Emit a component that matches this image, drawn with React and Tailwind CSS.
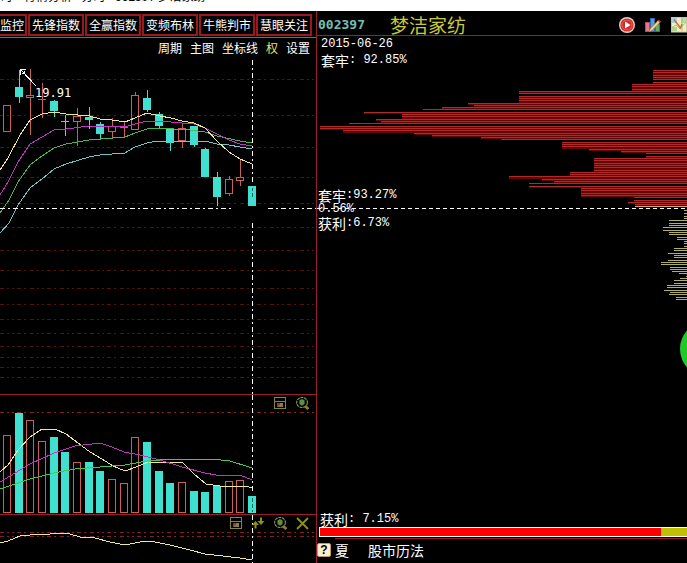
import React from 'react';

const TABS = ['先锋指数', '全赢指数', '变频布林', '牛熊判市', '慧眼关注'];
const MENU = ['周期', '主图', '坐标线', '权', '设置'];

const TEAL = '#40e0d0';
const RED = '#c8605a';

// x, open/close top, open/close bottom, high, low, rising
const CANDLES = [
  [7, 105, 132, 105, 132, true],
  [19, 87, 97, 70, 103, false],
  [30, 95, 98, 69, 135, true],
  [42, 99, 100, 83, 118, true],
  [54, 101, 111, 100, 117, false],
  [65, 121, 122, 115, 136, false],
  [77, 116, 122, 108, 146, true],
  [89, 117, 120, 107, 129, false],
  [100, 124, 134, 122, 139, false],
  [112, 126, 132, 118, 138, true],
  [124, 127, 128, 122, 138, true],
  [135, 95, 130, 92, 130, true],
  [147, 98, 110, 90, 112, false],
  [159, 114, 126, 112, 128, false],
  [170, 129, 143, 129, 151, false],
  [182, 128, 141, 124, 148, true],
  [194, 126, 145, 126, 147, false],
  [205, 149, 177, 148, 177, false],
  [217, 177, 197, 172, 206, false],
  [229, 179, 194, 176, 196, true],
  [240, 177, 181, 159, 186, true],
  [252, 186, 206, 186, 206, false],
];

const VOLUMES = [435, 413, 420, 441, 437, 452, 462, 462, 471, 479, 483, 437, 442, 471, 483, 482, 491, 492, 486, 481, 480, 496];

const PRICE_GRID = [79, 115, 147, 177, 203, 227, 250, 270, 288, 304, 319, 333, 346, 357, 367, 377];

const PRICE_LINES = [
  { color: '#68c8cc', points: '0,233 9,223 18,205 30,188 42,179 54,169 66,164 89,157 100,155 125,153 135,147 147,143 158,141 205,141 217,144 229,145 240,147 252,149' },
  { color: '#48b848', points: '0,213 9,200 18,182 30,165 42,156 54,148 66,144 89,140 125,137 135,133 147,129 158,128 190,130 205,132 217,136 240,141 252,143' },
  { color: '#c034c0', points: '0,195 8,182 18,162 30,144 42,137 54,130 66,129 89,126 125,127 135,124 147,121 160,121 182,123 194,124 205,128 217,134 229,140 240,144 252,146' },
  { color: '#f0e890', points: '0,170 8,158 20,135 30,120 42,114 54,112 66,114 90,116 100,119 112,120 125,122 135,118 147,113 160,116 171,118 182,121 194,123 205,128 217,141 229,152 240,159 252,164' },
];

const VOLUME_LINES = [
  { color: '#f0e890', points: '0,472 8,465 18,450 30,437 42,429 55,429 66,434 78,443 90,452 102,459 113,466 125,471 136,467 148,462 183,463 194,474 206,484 220,486 246,486 252,488' },
  { color: '#c034c0', points: '0,482 30,464 54,453 75,446 100,443 112,447 124,452 140,455 160,460 182,467 205,473 216,475 240,475 252,480' },
  { color: '#48c848', points: '0,489 30,479 54,473 75,469 100,467 125,465 147,461 160,460 176,459 212,459 230,461 252,468' },
];

const TREND_LINE = [
  { color: '#f0e890', points: '0,543 8,541 20,536 30,535 50,534 55,533 70,534 80,537 95,538 110,542 125,545 135,543 145,541 155,542 170,545 190,550 205,554 240,558 252,560' },
];

// Chips above the current price: y, left edge
const TRAPPED = [
  [70, 653], [72, 653], [75, 653], [77, 653], [79, 653], [82, 653], [84, 632], [86, 632], [89, 632],
  [91, 519], [93, 519], [96, 519], [98, 519], [100, 519], [103, 468], [105, 474], [107, 442], [109, 423],
  [112, 364], [114, 402], [116, 402], [119, 376], [121, 381], [123, 349], [126, 320], [128, 320], [130, 343],
  [133, 414], [135, 432], [137, 481], [139, 501], [142, 562], [144, 562], [146, 562], [149, 589], [151, 621],
  [153, 646], [156, 646], [158, 594], [160, 594], [163, 594], [165, 594], [167, 594], [170, 594], [172, 570],
  [174, 570], [176, 509], [179, 542], [181, 554], [183, 529], [186, 529], [188, 581], [190, 581], [193, 581],
  [195, 581], [197, 634], [200, 634], [202, 628], [204, 635],
];
const OPEN_ROWS = [79, 93, 109, 123, 139, 153, 183, 197];

// Chips below the current price
const PROFIT = [
  [210, 684], [213, 684], [216, 684], [218, 684], [220, 669], [223, 669], [225, 669], [227, 663], [230, 663],
  [232, 669], [234, 669], [237, 677], [239, 677], [241, 684], [243, 684], [246, 684], [248, 674], [250, 674],
  [253, 668], [255, 674], [257, 674], [260, 668], [262, 661], [264, 661], [267, 670], [269, 670], [271, 672],
  [273, 679], [276, 686], [278, 680], [280, 674], [283, 674], [285, 667], [287, 667], [290, 664], [292, 670],
  [294, 669], [297, 676], [299, 676],
];

function Lines({ items }) {
  return items.map(l => (
    <polyline key={l.color} points={l.points} fill="none" stroke={l.color} strokeWidth="1" />
  ));
}

function Dashes({ y, color }) {
  return <path d={`M0 ${y + 0.5}H315`} stroke={color} strokeDasharray="4 3 2 3 2 3 4 3 2 4" />;
}

function Crosshair({ from, to }) {
  return <path d={`M252.5 ${from}V${to}`} stroke="#fff" strokeDasharray="5 3 2 3" />;
}

function PriceChart() {
  return (
    <svg viewBox="0 57 316 337" className="block w-full" shapeRendering="crispEdges" role="img" aria-label="K线">
      {PRICE_GRID.map(y => <Dashes key={y} y={y} color="#541414" />)}
      {CANDLES.map(([x, top, bottom, high, low, up]) => {
        const color = up ? RED : TEAL;
        return (
          <g key={x} stroke={color}>
            <path d={`M${x + 0.5} ${high}V${top}M${x + 0.5} ${bottom}V${low}`} />
            <rect
              x={x - 3.5}
              y={top + 0.5}
              width="7"
              height={Math.max(bottom - top - 1, 0.1)}
              fill={up ? 'none' : color}
            />
          </g>
        );
      })}
      <Lines items={PRICE_LINES} />
      <path d="M252.5 188V191M252.5 193V197" stroke="#1c6860" />
      <path d="M36 86L21 70M20.5 75V69.5H26M22 73.5H24.5V71" stroke="#fff" fill="none" />
      <text x="35" y="97" fill="#fff" fontSize="12" fontFamily="'DejaVu Sans Mono', monospace">19.91</text>
      <path d="M0 208.5H234M268 208.5H316" stroke="#fff" strokeDasharray="5 3 2 3" />
      <Crosshair from={60} to={182} />
      <Crosshair from={223} to={394} />
    </svg>
  );
}

function VolumeChart() {
  return (
    <svg viewBox="0 395 316 119" className="block w-full" shapeRendering="crispEdges" role="img" aria-label="成交量">
      <Dashes y={412} color="#802424" />
      {VOLUMES.map((top, i) => {
        const [x, , , , , up] = CANDLES[i];
        const color = up ? RED : TEAL;
        return (
          <rect
            key={x}
            x={x - 3.5}
            y={top + 0.5}
            width="7"
            height={512 - top}
            stroke={color}
            fill={up ? 'none' : color}
          />
        );
      })}
      <Lines items={VOLUME_LINES} />
      <Crosshair from={395} to={494} />
      <path d="M252.5 498V512" stroke="#1c6860" strokeDasharray="4 2" />
    </svg>
  );
}

function TrendChart() {
  return (
    <svg viewBox="0 515 316 48" className="block w-full" shapeRendering="crispEdges" role="img" aria-label="指标">
      <Dashes y={532} color="#802424" />
      <Dashes y={536} color="#802424" />
      <Lines items={TREND_LINE} />
      <Crosshair from={515} to={563} />
    </svg>
  );
}

function ChipChart() {
  return (
    <svg viewBox="317 36 370 475" className="block w-full [grid-area:1/1]" shapeRendering="crispEdges" role="img" aria-label="筹码分布">
      {TRAPPED.map(([y, x], i) => {
        const next = TRAPPED[i + 1] ? TRAPPED[i + 1][0] : y + 2;
        return (
          <g key={y}>
            {!OPEN_ROWS.includes(y) && <rect x={x} y={y} width={687 - x} height={next - y} fill="#680404" />}
            <rect x={x} y={y} width={687 - x} height="1" fill="#ac2c2c" />
          </g>
        );
      })}
      <rect x="635" y="206" width="52" height="1" fill="#d8a070" />
      {PROFIT.map(([y, x]) => (
        <rect key={y} x={x} y={y} width={687 - x} height="1" fill="#b0b060" />
      ))}
      <path d="M317 208.5H687" stroke="#fff" strokeDasharray="4 3" />
      <circle cx="708" cy="349" r="28" fill="#22c82a" shapeRendering="auto" />
    </svg>
  );
}

function PanelIcon() {
  return (
    <svg width="13" height="13" viewBox="0 0 13 13" shapeRendering="crispEdges">
      <rect x="0.5" y="0.5" width="11" height="11" rx="1" fill="none" stroke="#85843c" />
      <path d="M1 4.5H11" stroke="#85843c" />
      <rect x="3" y="6" width="3" height="4" fill="#a03028" />
      <rect x="4" y="8" width="2" height="2" fill="#707070" />
      <rect x="6" y="6" width="3" height="4" fill="#8c8038" />
    </svg>
  );
}

function ZoomIcon() {
  return (
    <svg width="13" height="13" viewBox="0 0 13 13">
      <ellipse cx="6" cy="5.5" rx="5.4" ry="5" fill="none" stroke="#86925a" strokeWidth="1.1" strokeDasharray="3 0.7" />
      <path d="M6 2L8.6 3.5V7L6 8.7L3.4 7V3.5Z" fill="#5c9040" />
      <path d="M9 9L12.2 12" stroke="#8c8020" strokeWidth="2.8" />
    </svg>
  );
}

function ArrowsIcon() {
  return (
    <svg width="13" height="13" viewBox="0 0 13 13" fill="#909018">
      <path d="M3.5 4L7 8H4.5V11.5H2.5V8H0Z" />
      <path d="M8 0.5H10V4H12.5L9 8L5.5 4H8Z" />
    </svg>
  );
}

function CloseIcon() {
  return (
    <svg width="13" height="13" viewBox="0 0 13 13">
      <path d="M1 1L12 12M12 1L1 12" stroke="#909018" strokeWidth="1.8" />
    </svg>
  );
}

function PlayIcon() {
  return (
    <svg width="16" height="16" viewBox="0 0 16 16">
      <circle cx="8" cy="8" r="8" fill="#e8ccc4" />
      <circle cx="8" cy="8" r="6.6" fill="#d42c28" />
      <circle cx="8" cy="8" r="5" fill="none" stroke="#e47a74" strokeWidth="0.6" />
      <path d="M6 4.5L11.5 8L6 11.5Z" fill="#fff" />
    </svg>
  );
}

function EditChartIcon() {
  return (
    <svg width="16" height="16" viewBox="0 0 16 16">
      <rect x="0.5" y="5.5" width="4" height="9" fill="#e87888" stroke="#c04858" />
      <rect x="5.5" y="1.5" width="4" height="13" fill="#5c98dc" stroke="#3068b0" />
      <rect x="10.5" y="7.5" width="4" height="7" fill="#68a868" stroke="#407840" />
      <path d="M4 15L5 12L13 3.5L15 5.5L7 13.5Z" fill="#f0d080" stroke="#a07030" strokeWidth="0.6" />
      <path d="M13 3.5L14 2.5L16 4.5L15 5.5Z" fill="#d83020" />
    </svg>
  );
}

function NoteIcon() {
  return (
    <svg width="16" height="16" viewBox="0 0 16 16">
      <rect x="0.5" y="0.5" width="15" height="14.5" fill="#f4ecc4" stroke="#c8c8a0" />
      <rect x="1" y="1" width="5" height="5" fill="#a8d0dc" />
      <rect x="10" y="1" width="5" height="5" fill="#b8d8b0" />
      <rect x="1" y="10" width="5" height="4" fill="#b0d490" />
      <path d="M1 10.5L5 8L9 12L15 5M11 1V14" stroke="#a0b070" strokeWidth="0.8" fill="none" />
      <path d="M3 2.5L9.5 11L11 7" stroke="#c07828" strokeWidth="1.5" fill="none" />
    </svg>
  );
}

function Tools({ items }) {
  return (
    <div className="absolute top-0.5 right-[7px] flex gap-[9px]">
      {items.map(([label, Icon]) => (
        <button key={label} type="button" aria-label={label} className="block">
          <Icon />
        </button>
      ))}
    </div>
  );
}

function Num({ children }) {
  return <span className="font-['Liberation_Mono',monospace] text-xs leading-none">{children}</span>;
}

export default function App() {
  return (
    <div className="min-h-screen bg-black text-white font-['Noto_Sans_CJK_SC',sans-serif]">
      {/* Window title */}
      <div className="flex h-[11px] items-end gap-3 overflow-hidden bg-white pb-[9px] text-black text-xs leading-3 whitespace-pre">
        <span>司</span>
        <span>行情分析 - 分时 - 002397 梦洁家纺</span>
      </div>

      <div className="grid grid-cols-[317fr_370fr]">
        {/* Charts */}
        <div className="min-w-0 border-r border-[#9a2028]">
          <nav className="flex gap-px overflow-hidden border-b border-[#b05050] pt-[3px] pb-px text-xs">
            <button type="button" className="h-[22px] w-[27px] shrink-0 border-2 border-l-0 border-[#981a1e] pr-0.5 whitespace-nowrap">
              监控
            </button>
            {TABS.map(tab => (
              <button
                key={tab}
                type="button"
                className="h-[22px] w-14 shrink-0 border-2 border-[#981a1e] whitespace-nowrap"
              >
                {tab}
              </button>
            ))}
          </nav>

          <div className="flex h-[19px] items-center justify-end gap-2 pr-1.5 text-xs">
            {MENU.map(item => (
              <button key={item} type="button" className={item === '权' ? 'text-[#e8e070]' : 'text-white'}>
                {item}
              </button>
            ))}
          </div>

          <PriceChart />

          <div className="relative border-t border-[#9a2028]">
            <VolumeChart />
            <Tools items={[['窗口', PanelIcon], ['放大', ZoomIcon]]} />
          </div>

          <div className="relative border-t border-[#9a2028]">
            <TrendChart />
            <Tools items={[['窗口', PanelIcon], ['切换', ArrowsIcon], ['放大', ZoomIcon], ['关闭', CloseIcon]]} />
          </div>
        </div>

        {/* Chip distribution */}
        <div className="flex min-w-0 flex-col">
          <header className="flex h-[25px] items-center border-b border-[#9a2028] pt-[3px] pl-px">
            <span className="font-['DejaVu_Sans_Mono',monospace] text-[13px] font-bold text-[#70c0b4]">002397</span>
            <h1 className="ml-[25px] text-[19px] leading-5 text-[#c8c83c]">梦洁家纺</h1>
            <div className="ml-auto flex gap-2.5">
              <button type="button" aria-label="播放"><PlayIcon /></button>
              <button type="button" aria-label="画线"><EditChartIcon /></button>
              <button type="button" aria-label="笔记"><NoteIcon /></button>
            </div>
          </header>

          <div className="grid">
            <ChipChart />
            <div className="z-10 flex flex-col text-sm leading-[14px] [grid-area:1/1]">
              <div className="flex h-4 items-center pl-1"><Num>2015-06-26</Num></div>
              <div className="flex h-4 items-center pl-1 whitespace-pre">套牢<Num>: 92.85%</Num></div>
              <div className="mt-[120px] flex h-3.5 items-center pl-px">套牢<Num>:93.27%</Num></div>
              <div className="flex h-3.5 items-center pl-px"><Num>0.56%</Num></div>
              <div className="flex h-3.5 items-center pl-px">获利<Num>:6.73%</Num></div>
            </div>
          </div>

          <div className="flex h-4 items-center pl-[3px] text-sm whitespace-pre">获利<Num>: 7.15%</Num></div>
          <div className="ml-0.5 flex h-2.5 border border-r-0 border-white">
            <div className="w-[93%] bg-[#ff0000]" />
            <div className="flex-1 bg-[#c0c000]" />
          </div>
          <div className="mt-px ml-[18px] border-t border-[#9a2028]" />
          <footer className="flex h-[22px] items-center text-sm">
            <button
              type="button"
              className="flex size-3.5 items-center justify-center rounded-xs border border-[#c89858] bg-[#fcf0d0] font-['Liberation_Sans',sans-serif] text-xs leading-none font-bold text-black"
            >
              ?
            </button>
            <span className="ml-1">夏</span>
            <a href="#calendar" className="ml-[19px]">股市历法</a>
          </footer>
        </div>
      </div>
    </div>
  );
}
